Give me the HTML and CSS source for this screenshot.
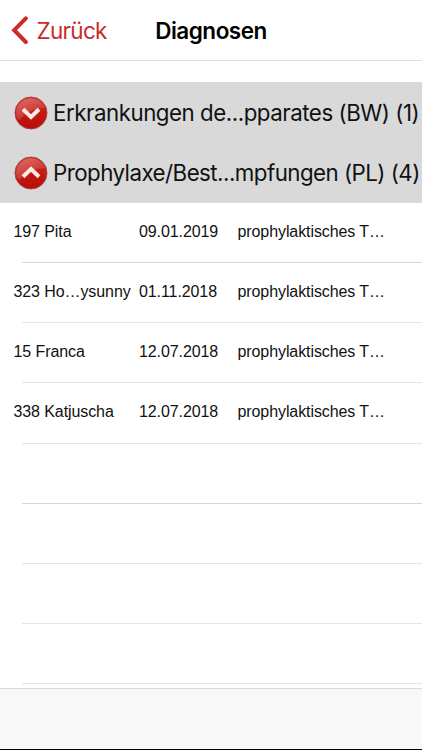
FILE: index.html
```html
<!DOCTYPE html>
<html lang="de">
<head>
<meta charset="utf-8">
<title>Diagnosen</title>
<link rel="stylesheet" href="styles.css">
</head>
<body>
<svg width="0" height="0" class="defs" aria-hidden="true">
  <defs>
    <linearGradient id="ball" x1="0" y1="0" x2="0" y2="1">
      <stop offset="0" stop-color="#cf342e"/>
      <stop offset=".45" stop-color="#c51b14"/>
      <stop offset="1" stop-color="#b80c08"/>
    </linearGradient>
    <linearGradient id="gloss" x1="0" y1="0" x2="1" y2="1">
      <stop offset="0" stop-color="#fff" stop-opacity=".3"/>
      <stop offset="1" stop-color="#fff" stop-opacity=".03"/>
    </linearGradient>
  </defs>
</svg>
<header class="nav">
  <a class="back">
    <svg class="chevron" width="18" height="30" viewBox="0 0 18 30"><path d="M15.8 3.4 4.2 15.2 15.8 27" fill="none" stroke="#c92b2b" stroke-width="4" stroke-linecap="round"/></svg>
    <span>Zurück</span>
  </a>
  <h1 class="title">Diagnosen</h1>
</header>
<main class="content">
  <section class="groups">
    <div class="group">
      <svg class="ball" viewBox="0 0 34 34"><circle cx="17" cy="17" r="16" fill="url(#ball)" stroke="#a9453f" stroke-width="1"/><path d="M2 17A15 15 0 0 1 31 12Q17 12 5 24Q2 21 2 17Z" fill="url(#gloss)"/><path d="M9 13.3 17 21 25 13.3" fill="none" stroke="#fbe9e7" stroke-width="4"/></svg>
      <span class="name first">Erkrankungen de...pparates (BW) (1)</span>
    </div>
    <div class="group">
      <svg class="ball" viewBox="0 0 34 34"><circle cx="17" cy="17" r="16" fill="url(#ball)" stroke="#a9453f" stroke-width="1"/><path d="M2 17A15 15 0 0 1 31 12Q17 12 5 24Q2 21 2 17Z" fill="url(#gloss)"/><path d="M9 20.7 17 13 25 20.7" fill="none" stroke="#fbe9e7" stroke-width="4"/></svg>
      <span class="name second">Prophylaxe/Best...mpfungen (PL) (4)</span>
    </div>
  </section>
  <ul class="list">
    <li class="row dark"><span>197 Pita</span><span>09.01.2019</span><span>prophylaktisches T…</span></li>
    <li class="row"><span>323 Ho…ysunny</span><span>01.11.2018</span><span>prophylaktisches T…</span></li>
    <li class="row"><span>15 Franca</span><span>12.07.2018</span><span>prophylaktisches T…</span></li>
    <li class="row"><span>338 Katjuscha</span><span>12.07.2018</span><span>prophylaktisches T…</span></li>
    <li class="row dark"></li>
    <li class="row"></li>
    <li class="row"></li>
    <li class="row"></li>
  </ul>
</main>
<footer class="toolbar"></footer>
</body>
</html>
```
FILE: styles.css
```css
* { box-sizing: border-box; }
body {
  margin: 0;
  width: 422px;
  height: 750px;
  display: flex;
  flex-direction: column;
  overflow: hidden;
  background: #fff;
  color: #111;
  font-family: Inter, sans-serif;
}
.defs { position: absolute; }
.nav {
  flex: none;
  height: 61px;
  display: grid;
  grid-template-columns: 1fr auto 1fr;
  align-items: center;
  border-bottom: 1px solid #dfdfdf;
}
.back {
  display: flex;
  align-items: center;
  padding-left: 9.5px;
  gap: 9px;
  color: #c92b2b;
  font-size: 22.5px;
  letter-spacing: -0.7px;
}
.chevron { flex: none; }
.title {
  margin: 0;
  color: #000;
  font-size: 22.5px;
  font-weight: 600;
  letter-spacing: -0.5px;
}
.content { flex: 1; min-height: 0; padding-top: 21px; overflow: hidden; }
.groups { background: #d9d9d9; height: 121px; }
.group {
  height: 60px;
  display: flex;
  align-items: center;
  padding: 1px 0 0 13.5px;
  gap: 5.5px;
}
.ball { flex: none; width: 34px; height: 34px; }
.name { font-size: 22.3px; white-space: nowrap; }
.first { letter-spacing: -0.47px; }
.second { letter-spacing: -0.53px; }
.list { list-style: none; margin: 0; padding: 0; }
.row {
  height: 60.14px;
  display: grid;
  grid-template-columns: 125.5px 98.5px 1fr;
  align-items: center;
  padding: 0 0 2px 13.5px;
  font: 16px "Liberation Sans", sans-serif;
  letter-spacing: -0.09px;
  white-space: nowrap;
  background: linear-gradient(#e6e6e6, #e6e6e6) 22px 100% / 100% 1px no-repeat;
}
.row.dark { background-image: linear-gradient(#d6d6d6, #d6d6d6); }
.toolbar {
  flex: none;
  height: 62px;
  background: #f8f8f8;
  border-top: 1px solid #d9d9d9;
  border-bottom: 1px solid #000;
}
```
